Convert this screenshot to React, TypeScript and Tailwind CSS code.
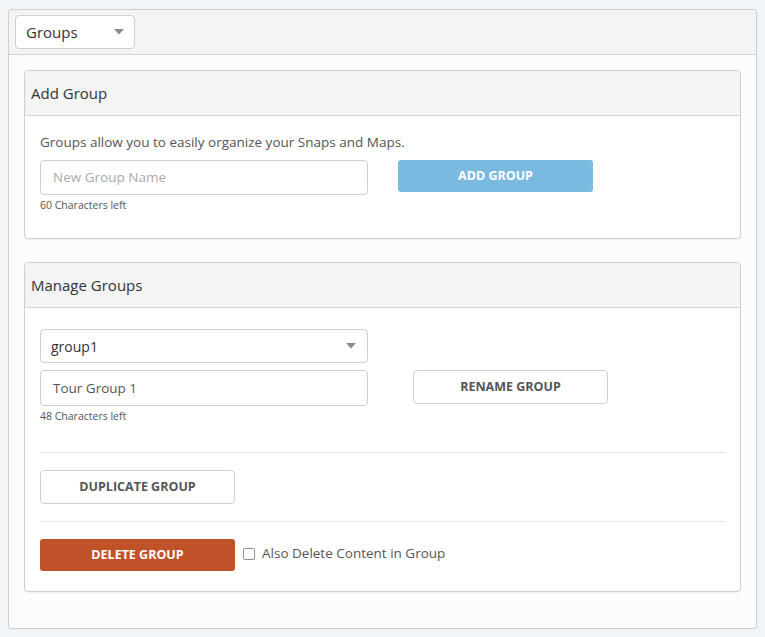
import React from "react";

const Caret = () => (
  <svg width="10" height="6" viewBox="0 0 10 6" className="block">
    <path d="M0 0 L10 0 L5 5.5 Z" fill="#8a8a8a" />
  </svg>
);

export default function App() {
  return (
    <div
      className="min-h-[637px] w-[765px] bg-[#f2f5f8] pt-[9px] px-[8px] text-[#333]"
      style={{ fontFamily: '"Open Sans", "Liberation Sans", sans-serif' }}
    >
      <div className="w-[749px] border border-[#cfcfcf] rounded-[3px] bg-[#fcfcfc]">
        <div className="h-[45px] bg-[#f4f4f4] border-b border-[#d4d4d4] pl-[6px] pt-[5px] rounded-t-[3px]">
          <div className="w-[120px] h-[34px] bg-white border border-[#cfcfcf] rounded-[4px] flex items-center justify-between pl-[10px] pr-[10px]">
            <span className="text-[15px] text-[#333] mt-[1px]">Groups</span>
            <Caret />
          </div>
        </div>
        <div className="px-[15px] pt-[15px] pb-[36px]">
          {/* Add Group */}
          <div className="border border-[#cfcfcf] rounded-[4px] bg-white shadow-[0_1px_1px_rgba(0,0,0,0.05)]">
            <div className="h-[45px] bg-[#f4f4f4] border-b border-[#d4d4d4] px-[6px] flex items-center rounded-t-[4px]">
              <span className="text-[15px] text-[#333]">Add Group</span>
            </div>
            <div className="px-[15px] pt-[16px] pb-[24px]">
              <p className="text-[13.5px] leading-[20px] text-[#555] mb-[8px]">
                Groups allow you to easily organize your Snaps and Maps.
              </p>
              <div className="flex items-start">
                <div className="w-[328px]">
                  <div className="h-[35px] border border-[#cfcfcf] rounded-[4px] flex items-center pl-[12px] text-[13.5px] text-[#aaa]">
                    New Group Name
                  </div>
                  <div className="text-[10.5px] leading-[18px] mt-[1px] text-[#555]">60 Characters left</div>
                </div>
                <div className="ml-[30px] w-[195px] h-[32px] bg-[#7ab9e0] rounded-[3px] flex items-center justify-center text-white text-[12.5px] font-bold">
                  ADD GROUP
                </div>
              </div>
            </div>
          </div>

          {/* Manage Groups */}
          <div className="mt-[23px] border border-[#cfcfcf] rounded-[4px] bg-white shadow-[0_1px_1px_rgba(0,0,0,0.05)]">
            <div className="h-[45px] bg-[#f4f4f4] border-b border-[#d4d4d4] px-[6px] flex items-center rounded-t-[4px]">
              <span className="text-[15px] text-[#333]">Manage Groups</span>
            </div>
            <div className="px-[15px] pt-[21px] pb-[20px]">
              <div className="w-[328px] h-[34px] border border-[#cfcfcf] rounded-[4px] flex items-center justify-between pl-[10px] pr-[11px]">
                <span className="text-[14px] text-[#333]">group1</span>
                <Caret />
              </div>
              <div className="flex items-start mt-[7px]">
                <div className="w-[328px]">
                  <div className="h-[36px] border border-[#cfcfcf] rounded-[4px] flex items-center pl-[12px] text-[13.5px] text-[#555]">
                    Tour Group 1
                  </div>
                  <div className="text-[10.5px] leading-[18px] mt-[1px] text-[#555]">48 Characters left</div>
                </div>
                <div className="ml-[45px] w-[195px] h-[34px] border border-[#cfcfcf] rounded-[4px] bg-white flex items-center justify-center text-[#555] text-[12.5px] font-bold">
                  RENAME GROUP
                </div>
              </div>
              <div className="mt-[27px] border-t border-[#e6e6e6]" />
              <div className="mt-[17px] w-[195px] h-[34px] border border-[#cfcfcf] rounded-[4px] bg-white flex items-center justify-center text-[#555] text-[12.5px] font-bold">
                DUPLICATE GROUP
              </div>
              <div className="mt-[17px] border-t border-[#e6e6e6]" />
              <div className="mt-[17px] flex items-center">
                <div className="w-[195px] h-[32px] bg-[#c0522a] rounded-[3px] flex items-center justify-center text-white text-[12.5px] font-bold">
                  DELETE GROUP
                </div>
                <div className="ml-[8px] w-[12px] h-[12px] border border-[#8f8f8f] rounded-[2px] bg-white -mt-[2px]" />
                <span className="ml-[7px] text-[13.5px] text-[#555] -mt-[3px]">Also Delete Content in Group</span>
              </div>
            </div>
          </div>
        </div>
      </div>
    </div>
  );
}
